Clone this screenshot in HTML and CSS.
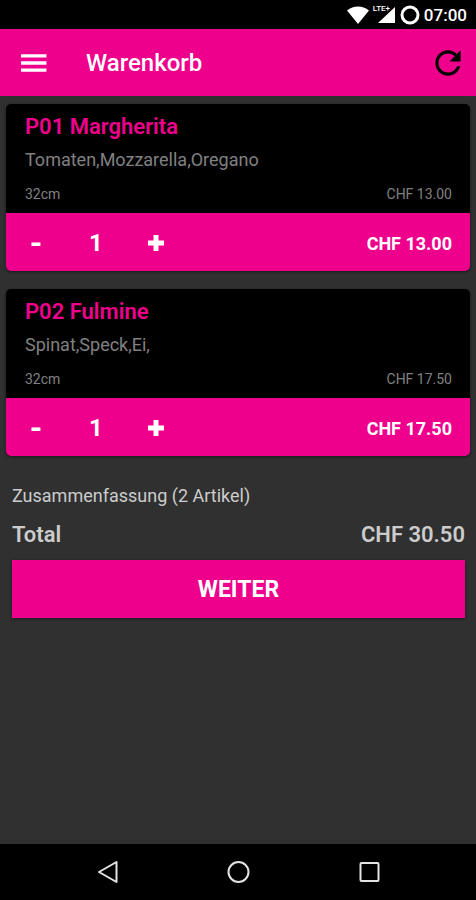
FILE: index.html
```html
<!DOCTYPE html>
<html lang="de">
<head>
    <meta charset="UTF-8">
    <meta name="viewport" content="width=device-width, initial-scale=1">
    <title>Warenkorb</title>
    <link rel="stylesheet" href="styles.css">
</head>
<body>
<div class="statusbar">
    <svg class="wifi" viewBox="0 0 22 18"><path d="M0 4.500C6.500-.8 15.500-.8 22 4.500L11 18z"/></svg>
    <span class="signal">
        <span class="lte">LTE+</span>
        <svg viewBox="0 0 17 16"><path d="M17 0v16H0z"/></svg>
    </span>
    <svg class="battery" viewBox="0 0 20 20"><circle cx="10" cy="10" r="8"/></svg>
    <span class="time">07:00</span>
</div>
<header class="appbar">
    <button class="icon-btn menu" aria-label="Menü">
        <svg viewBox="0 0 24 24"><path d="M3.500 18.200h18v-2.400h-18zM3.500 13.200h18v-2.400h-18zM3.500 8.200h18V5.800h-18z"/></svg>
    </button>
    <h1>Warenkorb</h1>
    <button class="icon-btn refresh" aria-label="Aktualisieren">
        <svg viewBox="0 0 24 24"><path d="M17.650 6.350C16.200 4.900 14.210 4 12 4c-4.420 0-7.990 3.580-7.990 8s3.570 8 7.990 8c3.730 0 6.840-2.550 7.730-6h-2.080c-.82 2.330-3.040 4-5.650 4-3.310 0-6-2.690-6-6s2.690-6 6-6c1.660 0 3.140.69 4.220 1.780L13 11h7V4l-2.350 2.350z"/></svg>
    </button>
</header>
<main>
    <ul class="cart">
        <li class="card">
            <div class="info">
                <h2>P01 Margherita</h2>
                <p>Tomaten,Mozzarella,Oregano</p>
                <div class="row"><span>32cm</span><span>CHF 13.00</span></div>
            </div>
            <div class="amount">
                <button aria-label="Weniger">-</button>
                <span class="count">1</span>
                <button aria-label="Mehr"><svg viewBox="0 0 16 16"><path d="M5.500 0h5v5.500H16v5h-5.500V16h-5v-5.500H0v-5h5.500z"/></svg></button>
                <span class="price">CHF 13.00</span>
            </div>
        </li>
        <li class="card">
            <div class="info">
                <h2>P02 Fulmine</h2>
                <p>Spinat,Speck,Ei,</p>
                <div class="row"><span>32cm</span><span>CHF 17.50</span></div>
            </div>
            <div class="amount">
                <button aria-label="Weniger">-</button>
                <span class="count">1</span>
                <button aria-label="Mehr"><svg viewBox="0 0 16 16"><path d="M5.500 0h5v5.500H16v5h-5.500V16h-5v-5.500H0v-5h5.500z"/></svg></button>
                <span class="price">CHF 17.50</span>
            </div>
        </li>
    </ul>
    <section class="summary">
        <p>Zusammenfassung (2 Artikel)</p>
        <div class="total"><span>Total</span><span>CHF 30.50</span></div>
        <button class="next">WEITER</button>
    </section>
</main>
<nav class="navbar">
    <button aria-label="Zurück"><svg viewBox="0 0 24 24"><path d="M21.500 2v20L4 12z"/></svg></button>
    <button aria-label="Start"><svg viewBox="0 0 24 24"><circle cx="12.500" cy="12" r="10"/></svg></button>
    <button aria-label="Übersicht"><svg viewBox="0 0 24 24"><rect x="3.500" y="3" width="18" height="18" rx="1"/></svg></button>
</nav>
</body>
</html>
```
FILE: styles.css
```css
*{
    margin: 0;
    padding: 0;
    box-sizing: border-box;
}
body{
    display: flex;
    flex-direction: column;
    min-height: 100vh;
    background: #303030;
    color: #ffffff;
    font-family: Roboto, sans-serif;
}
ul{
    list-style: none;
}
button{
    border: none;
    background: none;
    color: inherit;
    font: inherit;
    cursor: pointer;
}
svg{
    display: block;
    fill: currentColor;
}

/* status bar */
.statusbar{
    display: flex;
    align-items: center;
    justify-content: flex-end;
    height: 29px;
    padding-right: 9px;
    background: #000000;
}
.wifi{
    width: 22px;
    height: 18px;
}
.signal{
    position: relative;
    margin-left: 9px;
}
.signal svg{
    width: 17px;
    height: 16px;
}
.lte{
    position: absolute;
    left: -5px;
    top: -3px;
    font-size: 8px;
    font-weight: 500;
    line-height: 10px;
}
.battery{
    width: 20px;
    height: 20px;
    margin: 0 4px 0 5px;
    fill: none;
    stroke: #ffffff;
    stroke-width: 3;
}
.time{
    font-size: 17px;
    font-weight: 500;
    line-height: 28px;
}

/* app bar */
.appbar{
    display: flex;
    align-items: center;
    height: 67px;
    padding: 0 9px 0 16px;
    background: #ee008c;
}
.appbar h1{
    flex: 1;
    margin-left: 36px;
    font-size: 24px;
    font-weight: 500;
    line-height: 32px;
}
.menu svg{
    width: 34px;
    height: 34px;
}
.refresh svg{
    width: 38px;
    height: 38px;
    fill: #000000;
}

/* cart */
main{
    flex: 1;
    padding: 8px 6px;
}
.card{
    margin-bottom: 18px;
    border-radius: 5px;
    background: #000000;
    box-shadow: 0 1px 3px rgba(0,0,0,0.5);
    overflow: hidden;
}
.info{
    padding: 9px 18px 7px 19px;
    color: #808080;
}
.info h2{
    color: #ee008c;
    font-size: 22px;
    font-weight: 600;
    line-height: 28px;
}
.info p{
    margin-top: 7px;
    font-size: 18px;
    line-height: 24px;
}
.row{
    display: flex;
    justify-content: space-between;
    margin-top: 10px;
    font-size: 14px;
    line-height: 24px;
}
.amount{
    display: flex;
    align-items: center;
    height: 58px;
    padding: 2px 18px 0 10px;
    background: #ee008c;
    font-size: 24px;
    font-weight: bold;
}
.amount button{
    display: flex;
    align-items: center;
    justify-content: center;
    width: 40px;
    height: 40px;
    font-size: 32px;
}
.amount svg{
    width: 16px;
    height: 16px;
}
.count{
    width: 80px;
    text-align: center;
}
.price{
    margin-left: auto;
    font-size: 18px;
}

/* summary */
.summary{
    padding: 10px 5px 0 6px;
    color: #cccccc;
}
.summary p{
    font-size: 18px;
    line-height: 24px;
}
.total{
    display: flex;
    justify-content: space-between;
    margin: 13px 0 11px;
    font-size: 22px;
    font-weight: 600;
    line-height: 28px;
}
.next{
    display: block;
    width: 100%;
    height: 58px;
    background: #ee008c;
    color: #ffffff;
    font-size: 23px;
    font-weight: bold;
    box-shadow: 0 1px 3px rgba(0,0,0,0.5);
}

/* navigation bar */
.navbar{
    display: flex;
    justify-content: center;
    align-items: center;
    gap: 107px;
    height: 56px;
    background: #000000;
}
.navbar svg{
    width: 24px;
    height: 24px;
    fill: none;
    stroke: #e4e4e4;
    stroke-width: 2;
    stroke-linejoin: round;
}
```
